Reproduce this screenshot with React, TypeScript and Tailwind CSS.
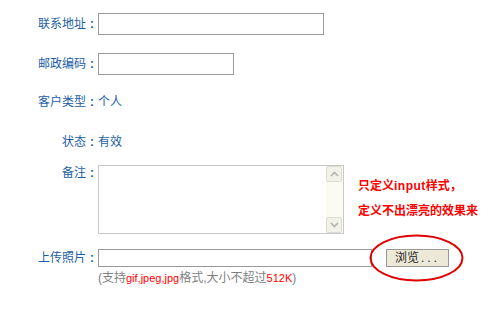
const font = { fontFamily: '"Liberation Sans", "Noto Sans CJK SC", sans-serif' };

function Label({ text }: { text: string }) {
  return (
    <div className="w-[98px] shrink-0 text-right text-[12px] leading-[16px] text-[#1c5ea6]">
      {text}
      <span className="inline-block w-[12px] text-center font-bold">:</span>
    </div>
  );
}

function Chevron({ up }: { up?: boolean }) {
  return (
    <svg width="9" height="6" viewBox="0 0 9 6">
      <path
        d={up ? "M1 5 L4.5 1.5 L8 5" : "M1 1 L4.5 4.5 L8 1"}
        fill="none"
        stroke="#b4b4ac"
        strokeWidth="1.6"
      />
    </svg>
  );
}

function ScrollButton({ up }: { up?: boolean }) {
  return (
    <div className="flex h-[16px] w-[16px] items-center justify-center rounded-[2px] border border-[#dcdcd2] bg-[#f2f1ea]">
      <Chevron up={up} />
    </div>
  );
}

export default function App() {
  return (
    <div className="relative h-[309px] w-[490px] overflow-hidden bg-white" style={font}>
      <div className="flex flex-col">
        <div className="mt-[13px] flex h-[22px] items-center">
          <Label text="联系地址" />
          <div className="h-[22px] w-[226px] border border-[#999]" />
        </div>

        <div className="mt-[18px] flex h-[22px] items-center">
          <Label text="邮政编码" />
          <div className="h-[22px] w-[136px] border border-[#999]" />
        </div>

        <div className="mt-[17px] flex h-[20px] items-center">
          <Label text="客户类型" />
          <span className="text-[12px] leading-[16px] text-[#1c5ea6]">个人</span>
        </div>

        <div className="mt-[20px] flex h-[20px] items-center">
          <Label text="状态" />
          <span className="text-[12px] leading-[16px] text-[#1c5ea6]">有效</span>
        </div>

        <div className="mt-[13px] flex items-start">
          <Label text="备注" />
          <div className="flex h-[69px] w-[246px] justify-end border border-[#c8c8c8] bg-white">
            <div className="flex h-full w-[17px] flex-col justify-between bg-[#fbfbf4]">
              <ScrollButton up />
              <ScrollButton />
            </div>
          </div>
          <div className="ml-[14px] mt-[9px] text-[12px] font-bold leading-[25px] text-[#ff0000]">
            <div>
              只定义<span className="tracking-[0.5px]">input</span>样式，
            </div>
            <div>定义不出漂亮的效果来</div>
          </div>
        </div>

        <div className="mt-[15px] flex h-[18px] items-center">
          <Label text="上传照片" />
          <div className="h-[18px] w-[274px] border border-[#999]" />
          <div className="ml-[14px] flex h-[18px] w-[63px] items-center border border-[#999] bg-[#ece9d8] pl-[8px] text-[12px] leading-[16px] text-[#222]">
            浏览<span className="pl-[2px] tracking-[3px]">...</span>
          </div>
        </div>

        <div className="mt-[3px] pl-[98px] text-[12px] leading-[16px] text-[#808080]">
          (支持<span className="text-[11px] text-[#ff0000]">gif,jpeg,jpg</span>格式,大小不超过
          <span className="text-[11px] text-[#ff0000]">512K</span>)
        </div>
      </div>

      <svg className="absolute left-[368px] top-[233px]" width="97" height="50" viewBox="0 0 97 50">
        <ellipse cx="48.5" cy="25" rx="46" ry="22.5" fill="none" stroke="#e00000" strokeWidth="2" />
      </svg>
    </div>
  );
}
